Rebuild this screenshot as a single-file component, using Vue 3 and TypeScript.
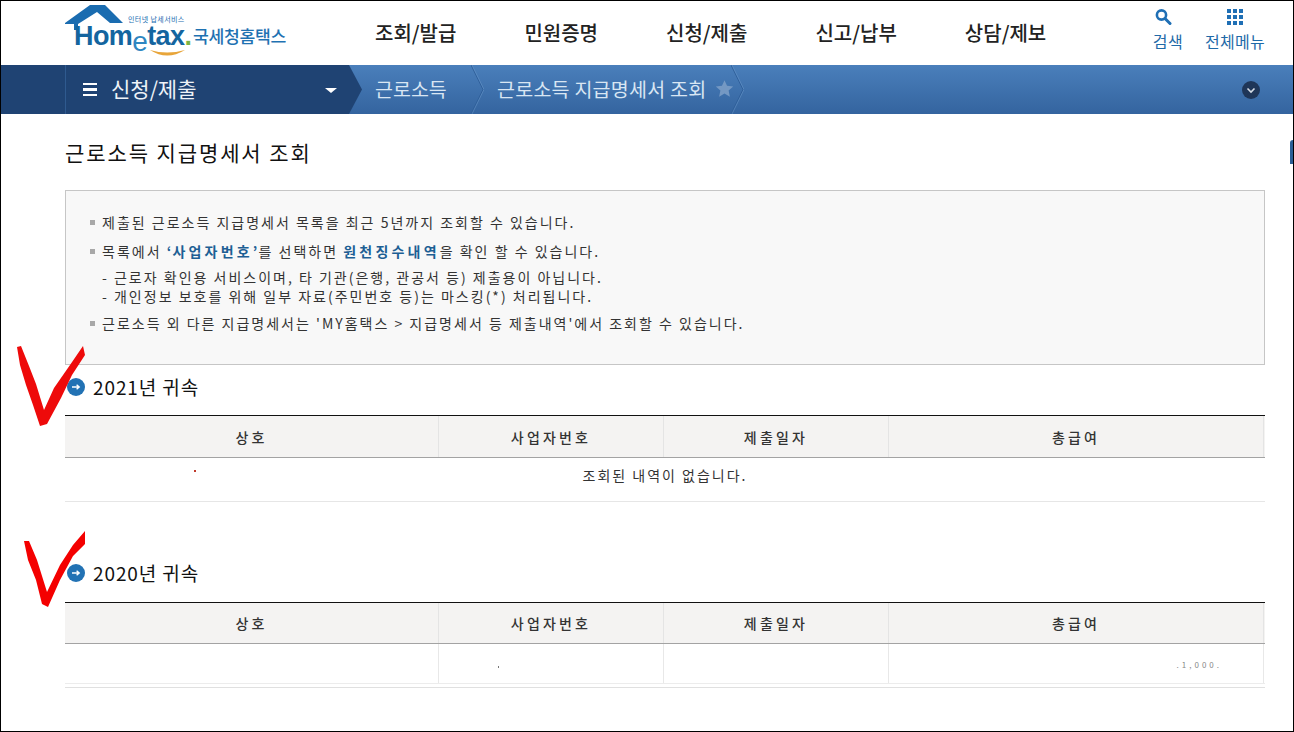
<script setup lang="ts">
const nav: string[] = ['조회/발급', '민원증명', '신청/제출', '신고/납부', '상담/제보']
const cols: string[] = ['상호', '사업자번호', '제출일자', '총급여']
</script>

<template>
  <div class="page">
    <header class="top">
      <div class="logo">
        <svg class="house" width="125" height="56" viewBox="0 0 125 56">
          <path d="M0 19 L25 1 L40 1 L58 19 L45 19 L32 8 L13 20 L13 26 L9 26 L9 20 L0 20 Z" fill="#1a6cb0" />
          <path d="M85 46 Q102 57 120 46 Q102 51 85 46 Z" fill="#e8a53a" />
        </svg>
        <span class="tag">인터넷 납세서비스</span>
        <span class="brand">Hom<span class="e">e</span>tax<span class="dot">.</span></span>
        <span class="kr">국세청홈택스</span>
      </div>
      <nav class="gnb">
        <a v-for="n in nav" :key="n">{{ n }}</a>
      </nav>
      <div class="tools">
        <div class="tool">
          <svg class="search" width="18" height="18" viewBox="0 0 18 18">
            <circle cx="7.5" cy="7" r="4.6" fill="none" stroke="#1f6fb5" stroke-width="2.6" />
            <path d="M11 10.5 L16 15.5" stroke="#1f6fb5" stroke-width="3" stroke-linecap="round" />
          </svg>
          <span>검색</span>
        </div>
        <div class="tool">
          <svg width="18" height="18" viewBox="0 0 18 18" fill="#1f6fb5">
            <rect x="1" y="1" width="4" height="4" /><rect x="7" y="1" width="4" height="4" /><rect x="13" y="1" width="4" height="4" />
            <rect x="1" y="7" width="4" height="4" /><rect x="7" y="7" width="4" height="4" /><rect x="13" y="7" width="4" height="4" />
            <rect x="1" y="13" width="4" height="4" /><rect x="7" y="13" width="4" height="4" /><rect x="13" y="13" width="4" height="4" />
          </svg>
          <span>전체메뉴</span>
        </div>
      </div>
    </header>

    <div class="bar">
      <div class="current">
        <span class="burger"><i></i><i></i><i></i></span>
        <span class="cur-label">신청/제출</span>
        <span class="caret"></span>
        <svg class="tip" width="13" height="49" viewBox="0 0 13 49">
          <path d="M0 0 L13 24.5 L0 49 Z" fill="#1f4373" />
        </svg>
      </div>
      <div class="crumb crumb-1">
        <span class="crumb-text">근로소득</span>
        <svg class="sep" width="13" height="49" viewBox="0 0 13 49">
          <path d="M0 0 L12 24.5 L0 49" fill="none" stroke="#2f5f9a" />
          <path d="M1 0 L13 24.5 L1 49" fill="none" stroke="#6e9ccd" stroke-opacity="0.5" />
        </svg>
      </div>
      <div class="crumb crumb-2">
        <span class="crumb-text">근로소득 지급명세서 조회</span>
        <svg class="star" width="19" height="19" viewBox="0 0 24 24">
          <path d="M12 1.5 L15.2 8.6 L23 9.4 L17.2 14.6 L18.8 22.3 L12 18.4 L5.2 22.3 L6.8 14.6 L1 9.4 L8.8 8.6 Z" fill="#7498c3" />
        </svg>
        <svg class="sep" width="13" height="49" viewBox="0 0 13 49">
          <path d="M0 0 L12 24.5 L0 49" fill="none" stroke="#2f5f9a" />
          <path d="M1 0 L13 24.5 L1 49" fill="none" stroke="#6e9ccd" stroke-opacity="0.5" />
        </svg>
      </div>
      <span class="more">
        <svg width="18" height="18" viewBox="0 0 18 18">
          <circle cx="9" cy="9" r="9" fill="#1f3658" />
          <path d="M5.5 7.5 L9 11 L12.5 7.5" fill="none" stroke="#d6dde6" stroke-width="1.6" />
        </svg>
      </span>
    </div>

    <main class="content">
      <h1>근로소득 지급명세서 조회</h1>
      <div class="notice">
        <p class="li">제출된 근로소득 지급명세서 목록을 최근 5년까지 조회할 수 있습니다.</p>
        <p class="li">목록에서 <b class="q">‘</b><b>사업자번호</b><b class="q">’</b>를 선택하면 <b>원천징수내역</b>을 확인 할 수 있습니다.</p>
        <p class="dash first">- 근로자 확인용 서비스이며, 타 기관(은행, 관공서 등) 제출용이 아닙니다.</p>
        <p class="dash">- 개인정보 보호를 위해 일부 자료(주민번호 등)는 마스킹(*) 처리됩니다.</p>
        <p class="li last">근로소득 외 다른 지급명세서는 'MY홈택스 &gt; 지급명세서 등 제출내역'에서 조회할 수 있습니다.</p>
      </div>

      <section class="sec sec-1">
        <h2><span class="bullet"><svg width="18" height="18" viewBox="0 0 18 18"><circle cx="9" cy="9" r="9" fill="#2272b4" /><path d="M5 9 H12 M9.6 6.8 L12.2 9 L9.6 11.2" fill="none" stroke="#fff" stroke-width="1.4" /></svg></span>2021년 귀속</h2>
        <div class="table">
          <div class="row head">
            <div v-for="c in cols" :key="c" class="cell">{{ c }}</div>
          </div>
          <div class="empty"><i class="speck"></i>조회된 내역이 없습니다.</div>
        </div>
      </section>

      <section class="sec sec-2">
        <h2><span class="bullet"><svg width="18" height="18" viewBox="0 0 18 18"><circle cx="9" cy="9" r="9" fill="#2272b4" /><path d="M5 9 H12 M9.6 6.8 L12.2 9 L9.6 11.2" fill="none" stroke="#fff" stroke-width="1.4" /></svg></span>2020년 귀속</h2>
        <div class="table">
          <div class="row head">
            <div v-for="c in cols" :key="c" class="cell">{{ c }}</div>
          </div>
          <div class="row body">
            <div class="cell"></div>
            <div class="cell"><i class="dot-mark"></i></div>
            <div class="cell"></div>
            <div class="cell"><span class="residue">.1,000.</span></div>
          </div>
          <div class="foot-line"></div>
        </div>
      </section>
    </main>

    <span class="edge"></span>

    <svg class="marks" width="100" height="620" viewBox="0 0 100 620">
      <polygon points="17,347 21,346 29,366 36,384 44,410 54,388 70,365 83,346 85,355 72,375 61,398 47,424 40,426 33,405 26,385 20,365" fill="#ee0a0a" />
      <polygon points="24,541 29,541 37,560 47,592 60,565 73,545 85,531 85,544 73,556 60,580 48,607 42,604 36,580 28,560" fill="#f40000" />
    </svg>
  </div>
</template>

<style>
html, body { margin: 0; background: #fff; }
</style>

<style scoped>
.page {
  position: relative;
  width: 1294px;
  height: 732px;
  box-sizing: border-box;
  border: 1px solid #000;
  overflow: hidden;
  background: #fff;
  font-family: "Noto Sans CJK KR", "Liberation Sans", sans-serif;
  color: #333;
}
.top {
  display: flex;
  height: 64px;
  padding-left: 64px;
  background: #fff;
}
.logo {
  position: relative;
  width: 240px;
  height: 64px;
  flex: none;
}
.house { position: absolute; left: 0; top: 3px; }
.tag {
  position: absolute;
  left: 63px;
  top: 13px;
  font-size: 7px;
  line-height: 10px;
  letter-spacing: 0.4px;
  color: #1a6cb0;
  white-space: nowrap;
}
.brand {
  position: absolute;
  left: 9px;
  top: 23px;
  font-family: "Liberation Sans", sans-serif;
  font-size: 27px;
  line-height: 24px;
  font-weight: 700;
  letter-spacing: -0.6px;
  color: #14659f;
  white-space: nowrap;
}
.brand .e { position: relative; top: 6px; font-size: 28px; color: #2e86c1; font-weight: 400; }
.brand .dot { color: #7cb342; }
.kr {
  position: absolute;
  left: 128px;
  top: 22px;
  font-size: 17.2px;
  line-height: 26px;
  font-weight: 500;
  letter-spacing: -0.3px;
  color: #1f72b2;
  white-space: nowrap;
}
.gnb {
  display: flex;
  margin-left: 70px;
  gap: 68px;
  padding-top: 18px;
}
.gnb a {
  font-size: 20px;
  line-height: 28px;
  font-weight: 500;
  color: #222;
  text-align: center;
  white-space: nowrap;
}
.tools {
  display: flex;
  margin-left: auto;
  margin-right: 28px;
  gap: 22px;
  padding-top: 7px;
}
.tool {
  display: flex;
  flex-direction: column;
  align-items: center;
  font-size: 16px;
  letter-spacing: 0.3px;
  line-height: 22px;
  color: #1f6aa8;
  white-space: nowrap;
}
.tool span { margin-top: 4px; }
.search { align-self: flex-start; margin-left: 1px; }
.bar {
  display: flex;
  height: 49px;
  align-items: center;
  background: linear-gradient(#4a7fbb, #34649f);
  position: relative;
  color: #d9e6f3;
  font-size: 19.5px;
}
.current {
  position: relative;
  display: flex;
  align-items: center;
  width: 284px;
  height: 49px;
  margin-left: 64px;
  flex: none;
  background: #1f4373;
  box-shadow: -64px 0 0 #1f4373;
  border-left: 1px solid #2f5a8f;
  box-sizing: border-box;
  color: #eef3f8;
}
.burger {
  display: flex;
  flex-direction: column;
  gap: 3px;
  margin-left: 17px;
  width: 14px;
}
.burger i { display: block; height: 2.4px; background: #fff; }
.cur-label { margin-left: 14px; font-size: 21px; padding-bottom: 4px; }
.caret {
  position: absolute;
  right: 12px;
  top: 23px;
  border: 6px solid transparent;
  border-top: 5px solid #fff;
  border-bottom: 0;
}
.tip { position: absolute; left: 100%; top: 0; }
.crumb {
  position: relative;
  display: flex;
  align-items: center;
  height: 49px;
  white-space: nowrap;
  box-sizing: border-box;
}
.crumb-text { padding-bottom: 2px; }
.crumb .sep { position: absolute; right: 0; top: 0; }
.crumb-1 { padding-left: 26px; width: 135px; }
.crumb-2 { padding-left: 13px; width: 260px; letter-spacing: 0.25px; }
.star { margin-left: 9px; margin-bottom: 2px; }
.more { display: flex; margin-left: auto; margin-right: 33px; }
.content { padding: 0 28px 0 64px; }
h1 {
  margin: 23px 0 0;
  font-size: 21px;
  line-height: 30px;
  font-weight: 400;
  color: #111;
  letter-spacing: 1.9px;
}
.notice {
  box-sizing: border-box;
  margin-top: 23px;
  height: 175px;
  padding: 21px 24px 0;
  border: 1px solid #c6c6c6;
  background: #f8f8f8;
  font-size: 14px;
  color: #333;
}
.notice p { margin: 0; line-height: 20px; letter-spacing: 2px; white-space: nowrap; }
.li { position: relative; padding-left: 12px; margin-bottom: 9px !important; }
.li::before {
  content: "";
  position: absolute;
  left: 0;
  top: 8px;
  width: 5px;
  height: 5px;
  background: #a8a8a8;
}
.li b { color: #1d5f94; font-weight: 700; letter-spacing: 3.2px; }
.li b.q { letter-spacing: 1.2px; }
.notice .dash { padding-left: 12px; line-height: 19px; }
.dash.first { margin-top: -2px !important; }
.li.last { margin-top: 7px !important; }
.sec h2 {
  display: flex;
  align-items: center;
  margin: 0;
  font-size: 19px;
  line-height: 28px;
  font-weight: 400;
  letter-spacing: 0.9px;
  color: #111;
}
.bullet { display: flex; width: 26px; padding-left: 2px; flex: none; }
.sec-1 { margin-top: 8px; }
.sec-2 { margin-top: 57px; }
.table { margin-top: 14px; }
.sec-2 .table { margin-top: 15px; }
.row { display: grid; grid-template-columns: 374px 225px 225px 375px; }
.head {
  border-top: 1px solid #111;
  border-bottom: 1px solid #a3a3a3;
  background: #f4f3f2;
  height: 43px;
  box-sizing: border-box;
}
.sec-2 .head { height: 42px; }
.head .cell {
  display: flex;
  align-items: center;
  justify-content: center;
  font-size: 14px;
  font-weight: 500;
  letter-spacing: 3.2px;
  color: #333;
  border-right: 1px solid #e4e4e4;
}
.empty {
  position: relative;
  height: 43px;
  line-height: 34px;
  text-align: center;
  font-size: 14px;
  letter-spacing: 2px;
  border-bottom: 1px solid #e6e6e6;
}
.speck {
  position: absolute;
  left: 129px;
  top: 12px;
  width: 2px;
  height: 2px;
  background: #c0392b;
}
.body {
  height: 40px;
  box-sizing: border-box;
  border-bottom: 1px solid #ececec;
}
.body .cell { border-right: 1px solid #e8e8e8; position: relative; }
.foot-line { height: 1px; margin-top: 3px; background: #e0e0e0; }
.dot-mark {
  position: absolute;
  left: 59px;
  top: 22px;
  width: 1px;
  height: 2px;
  background: #777;
}
.residue {
  position: absolute;
  right: 41px;
  top: 16px;
  font-size: 8px;
  line-height: 10px;
  letter-spacing: 3px;
  color: #888;
  white-space: nowrap;
}
.edge {
  position: absolute;
  right: 0;
  top: 139px;
  width: 3px;
  height: 24px;
  background: #2b5f96;
  border-radius: 3px 0 0 0;
}
.marks { position: absolute; left: -1px; top: -1px; pointer-events: none; }
</style>
